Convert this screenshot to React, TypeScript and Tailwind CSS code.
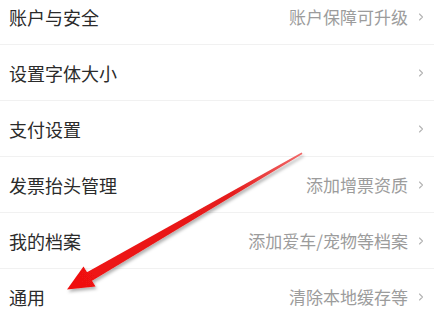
import React from 'react';

interface SettingRow {
  label: string;
  hint?: string;
}

const rows: SettingRow[] = [
  { label: '账户与安全', hint: '账户保障可升级' },
  { label: '设置字体大小' },
  { label: '支付设置' },
  { label: '发票抬头管理', hint: '添加增票资质' },
  { label: '我的档案', hint: '添加爱车/宠物等档案' },
  { label: '通用', hint: '清除本地缓存等' },
];

function Chevron() {
  return (
    <svg width="6" height="10" viewBox="0 0 6 10" className="shrink-0">
      <path d="M1.5 2 L4.5 5 L1.5 8" fill="none" stroke="#b4b4b4" strokeWidth="1.1" strokeLinecap="round" strokeLinejoin="round" />
    </svg>
  );
}

function Arrow() {
  return (
    <svg className="absolute inset-0 pointer-events-none" width="434" height="321" viewBox="0 0 434 321">
      <defs>
        <linearGradient id="arrowFill" x1="302" y1="153" x2="68" y2="289" gradientUnits="userSpaceOnUse">
          <stop offset="0" stopColor="#f06a6a" />
          <stop offset="0.3" stopColor="#e51c1c" />
          <stop offset="1" stopColor="#f01010" />
        </linearGradient>
        <filter id="arrowShadow" x="-10%" y="-10%" width="130%" height="130%">
          <feDropShadow dx="1.5" dy="2.5" stdDeviation="1.5" floodColor="#000" floodOpacity="0.3" />
        </filter>
      </defs>
      <polygon
        points="302,153 302.4,154 92,280.8 95.5,286.5 67,289.5 83.5,266.5 87,272.2 301.6,152.6"
        fill="url(#arrowFill)"
        filter="url(#arrowShadow)"
      />
    </svg>
  );
}

export default function App() {
  return (
    <div
      className="relative w-[434px] h-[321px] overflow-hidden bg-white"
      style={{ fontFamily: '"Noto Sans CJK SC", "Noto Sans", sans-serif' }}
    >
      <div className="-mt-[11px]">
        {rows.map((row) => (
          <div
            key={row.label}
            className="flex items-center h-[56px] pl-[9px] pr-[10px] border-b border-[#f1f1f1]"
          >
            <span className="flex-1 text-[18px] leading-none text-[#2b2b2b]">{row.label}</span>
            {row.hint && (
              <span className="text-[17px] leading-none text-[#9c9c9c] mr-[10px]">{row.hint}</span>
            )}
            <Chevron />
          </div>
        ))}
      </div>
      <Arrow />
    </div>
  );
}
